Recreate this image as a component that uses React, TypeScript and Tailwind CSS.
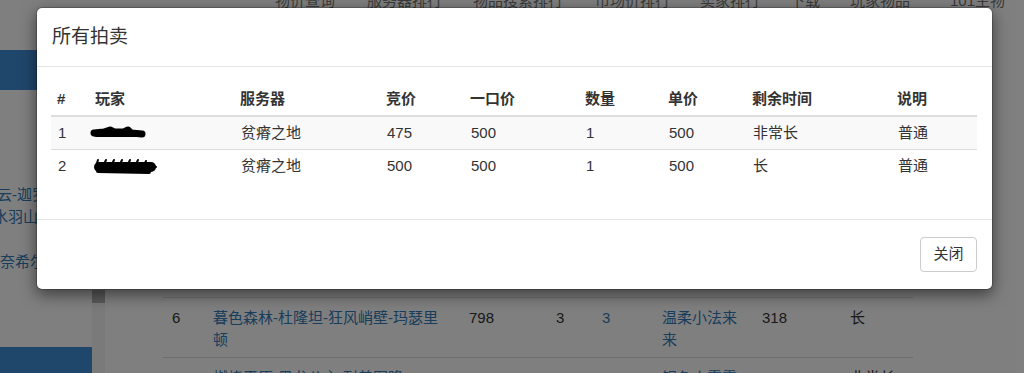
import React from "react";

const FONT = { fontFamily: '"Liberation Sans", "Noto Sans CJK SC", sans-serif' };

const navItems: [string, string][] = [
  ["物价查询", "w-[92px]"],
  ["服务器排行", "w-[106px]"],
  ["物品搜索排行", "w-[122px]"],
  ["市场价排行", "w-[105px]"],
  ["卖家排行", "w-[90px]"],
  ["下载", "w-[60px]"],
  ["玩家物品", "w-[100px]"],
  ["101生物", "w-[74px]"],
];

const cols = "grid grid-cols-[38px_145px_146px_84px_115px_83px_84px_145px_86px]";

function Blob1() {
  return (
    <svg width="60" height="14" viewBox="0 0 60 14" className="block">
      <path d="M4 7 L14 6 L20 4 L24 6 L34 6 L38 4 L41 7 L52 8" stroke="#000" strokeWidth="7" strokeLinecap="round" strokeLinejoin="round" fill="none" />
      <path d="M6 9 L50 9" stroke="#000" strokeWidth="4" strokeLinecap="round" />
    </svg>
  );
}

function Blob2() {
  return (
    <svg width="66" height="18" viewBox="0 0 66 18" className="block">
      <path d="M6 10 L58 10" stroke="#000" strokeWidth="10" strokeLinecap="round" />
      <path d="M4 6 L5 3 M12 5 L13 3 M20 5 L21 3 M28 5 L29 3 M36 5 L37 3 M44 5 L45 3 M52 6 L53 4 M60 9 L63 10" stroke="#000" strokeWidth="2" strokeLinecap="round" />
      <path d="M5 14 L56 15" stroke="#000" strokeWidth="4" strokeLinecap="round" />
    </svg>
  );
}

export default function App() {
  return (
    <div className="relative w-[1024px] h-[373px] overflow-hidden bg-white text-[#333]" style={FONT}>
      {/* underlying page */}
      <div className="flex flex-col">
        <div className="h-[10px] flex pl-[275px]">
          {navItems.map(([t, w]) => (
            <div key={t} className={`${w} -mt-[9px] text-[15px] leading-[20px] text-[#777] whitespace-nowrap`}>
              {t}
            </div>
          ))}
        </div>
        <div className="flex h-[363px]">
          {/* sidebar */}
          <div className="w-[92px] flex flex-col overflow-hidden text-[15px] text-[#337ab7]">
            <div className="mt-[40px] h-[40px] bg-[#3f8fd6]" />
            <div className="mt-[94px] leading-[22px] whitespace-nowrap -ml-[18px]">风云-迦罗斯</div>
            <div className="leading-[22px] whitespace-nowrap -ml-[7px]">水羽山脉</div>
            <div className="mt-[23px] leading-[22px] whitespace-nowrap">奈希尔</div>
            <div className="mt-[74px] flex-1 bg-[#3f8fd6]" />
          </div>
          {/* strip */}
          <div className="w-[13px] flex flex-col bg-[#f4f4f4]">
            <div className="h-[280px]" />
            <div className="h-[13px] bg-[#b5b5b5]" />
          </div>
          {/* main */}
          <div className="flex-1 pl-[58px] pt-[287px] text-[15px]">
            <div className="w-[750px]">
              <div className="grid grid-cols-[42px_256px_87px_46px_60px_100px_88px_71px] border-t border-[#ddd] pt-[9px] pb-[6px] leading-[22px]">
                <div className="pl-[9px]">6</div>
                <div className="pl-[8px] pr-[16px] text-[#337ab7]">暮色森林-杜隆坦-狂风峭壁-玛瑟里顿</div>
                <div className="pl-[8px]">798</div>
                <div className="pl-[8px]">3</div>
                <div className="pl-[8px] text-[#337ab7]">3</div>
                <div className="pl-[8px] pr-[12px] text-[#337ab7]">温柔小法来来</div>
                <div className="pl-[8px]">318</div>
                <div className="pl-[8px]">长</div>
              </div>
              <div className="grid grid-cols-[42px_256px_87px_46px_60px_100px_88px_71px] border-t border-[#ddd] pt-[9px] leading-[22px]">
                <div className="pl-[9px]">7</div>
                <div className="pl-[8px] pr-[16px] text-[#337ab7]">燃烧平原-黑龙公主-耐普图隆</div>
                <div className="pl-[8px]">652</div>
                <div className="pl-[8px]">1</div>
                <div className="pl-[8px] text-[#337ab7]">1</div>
                <div className="pl-[8px] pr-[12px] text-[#337ab7]">银色小霜霜</div>
                <div className="pl-[8px]">652</div>
                <div className="pl-[8px]">非常长</div>
              </div>
            </div>
          </div>
        </div>
      </div>

      {/* backdrop */}
      <div className="absolute inset-0 bg-black/50" />

      {/* modal */}
      <div className="absolute left-[36px] top-[7px] w-[957px] bg-white rounded-[6px] border border-black/20 shadow-[0_5px_15px_rgba(0,0,0,0.5)] bg-clip-padding">
        <div className="px-[15px] py-[15px] border-b border-[#e5e5e5]">
          <div className="text-[19px] leading-[28px] text-[#333]">所有拍卖</div>
        </div>
        <div className="pl-[14px] pr-[15px] pt-[17px] pb-[37px] text-[15px]">
          <div className={`${cols} h-[33px] items-center border-b-2 border-[#ddd] font-bold`}>
            {["#", "玩家", "服务器", "竞价", "一口价", "数量", "单价", "剩余时间", "说明"].map((h) => (
              <div key={h} className="pl-[6px]">{h}</div>
            ))}
          </div>
          <div className={`${cols} h-[32px] items-center bg-[#f9f9f9]`}>
            <div className="pl-[7px]">1</div>
            <div className="pl-[1px]"><Blob1 /></div>
            <div className="pl-[7px]">贫瘠之地</div>
            <div className="pl-[7px]">475</div>
            <div className="pl-[7px]">500</div>
            <div className="pl-[7px]">1</div>
            <div className="pl-[7px]">500</div>
            <div className="pl-[7px]">非常长</div>
            <div className="pl-[7px]">普通</div>
          </div>
          <div className={`${cols} h-[33px] items-center border-t border-[#ddd]`}>
            <div className="pl-[7px]">2</div>
            <div className="pl-[4px]"><Blob2 /></div>
            <div className="pl-[7px]">贫瘠之地</div>
            <div className="pl-[7px]">500</div>
            <div className="pl-[7px]">500</div>
            <div className="pl-[7px]">1</div>
            <div className="pl-[7px]">500</div>
            <div className="pl-[7px]">长</div>
            <div className="pl-[7px]">普通</div>
          </div>
        </div>
        <div className="flex justify-end pr-[15px] pt-[17px] pb-[17px] border-t border-[#e5e5e5]">
          <button className="w-[57px] h-[35px] border border-[#ccc] rounded-[4px] bg-white text-[15px] text-[#333]">
            关闭
          </button>
        </div>
      </div>
    </div>
  );
}
